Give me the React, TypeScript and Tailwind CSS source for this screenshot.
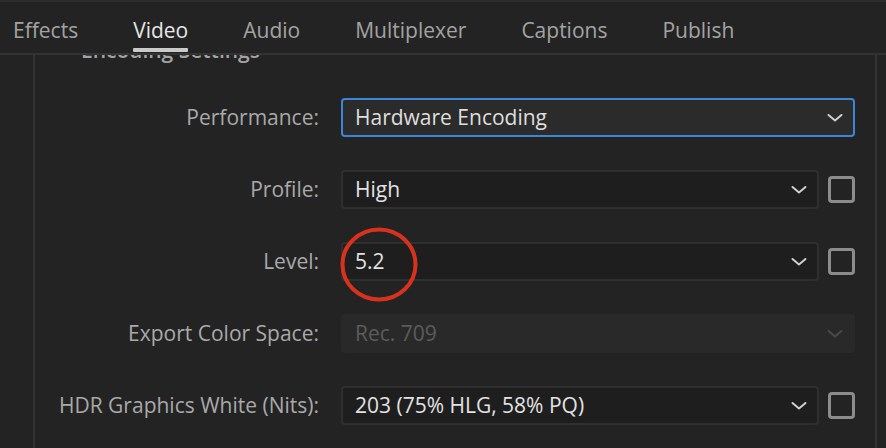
import React from "react";

const Chevron = ({ dim = false }: { dim?: boolean }) => (
  <svg width="16" height="10" viewBox="0 0 16 10" className="shrink-0">
    <path d="M1.5 2 L8 7.5 L14.5 2" fill="none" stroke={dim ? "#4a4a4a" : "#cfcfcf"} strokeWidth="2" strokeLinecap="round" strokeLinejoin="round" />
  </svg>
);

const Checkbox = () => (
  <div className="w-[27px] h-[27px] rounded-[4px] border-[3px] border-[#8c8c8c] shrink-0" />
);

type RowProps = {
  label: string;
  value: string;
  variant?: "focus" | "normal" | "disabled";
  checkbox?: boolean;
};

const Row = ({ label, value, variant = "normal", checkbox = false }: RowProps) => {
  const box =
    variant === "focus"
      ? "bg-[#2b2b2b] border-2 border-[#3b86d6] text-[#dedede]"
      : variant === "disabled"
      ? "bg-[#292929] border-2 border-transparent text-[#5c5c5c]"
      : "bg-[#1e1e1e] border-2 border-[#2f2f2f] text-[#e2e2e2]";
  return (
    <div className="flex items-center h-[39px]">
      <div className="w-[284px] text-right text-[#a9a9a9] whitespace-nowrap">{label}</div>
      <div className="ml-[22px] flex items-center gap-[9px] w-[514px]">
        <div className={`flex-1 h-[39px] rounded-[4px] flex items-center justify-between pl-[12px] pr-[10px] ${box}`}>
          <span className="whitespace-nowrap">{value}</span>
          <Chevron dim={variant === "disabled"} />
        </div>
        {checkbox && <Checkbox />}
      </div>
    </div>
  );
};

export default function App() {
  const tabs = ["Effects", "Video", "Audio", "Multiplexer", "Captions", "Publish"];
  return (
    <div
      className="relative w-[886px] h-[448px] bg-[#232323] overflow-hidden flex flex-col text-[21px]"
      style={{ fontFamily: '"Open Sans", "Noto Sans", sans-serif' }}
    >
      <div className="h-[2px] bg-[#2c2c2c] shrink-0" />
      <div className="h-[53px] border-b-2 border-[#333333] flex items-start pl-[13px] gap-[55px] shrink-0">
        {tabs.map((t) => (
          <div key={t} className="relative h-full flex flex-col items-center">
            <span className={`mt-[14px] leading-[28px] whitespace-nowrap ${t === "Video" ? "text-[#e6e6e6]" : "text-[#a3a3a3]"}`}>{t}</span>
            {t === "Video" && <div className="absolute left-0 right-0 top-[46px] h-[4px] bg-[#cacaca] rounded-[1px]" />}
          </div>
        ))}
      </div>
      <div className="flex flex-1">
        <div className="w-[35px] border-r-2 border-[#333333] shrink-0" />
        <div className="flex-1 flex flex-col">
          <div className="h-[8px] overflow-hidden pl-[46px]">
            <div className="mt-[-19px] leading-[28px] font-semibold text-[#a3a3a3] whitespace-nowrap">Encoding Settings</div>
          </div>
          <div className="mt-[35px] flex flex-col gap-[33px]">
            <Row label="Performance:" value="Hardware Encoding" variant="focus" />
            <Row label="Profile:" value="High" checkbox />
            <Row label="Level:" value="5.2" checkbox />
            <Row label="Export Color Space:" value="Rec. 709" variant="disabled" />
            <Row label="HDR Graphics White (Nits):" value="203 (75% HLG, 58% PQ)" checkbox />
          </div>
        </div>
        <div className="w-[11px] border-l-2 border-[#333333] shrink-0" />
      </div>
      <svg className="absolute left-[339px] top-[226px]" width="80" height="77" viewBox="0 0 80 77">
        <ellipse cx="40" cy="38.5" rx="36.5" ry="35" fill="none" stroke="#d8321e" strokeWidth="4" />
      </svg>
    </div>
  );
}
